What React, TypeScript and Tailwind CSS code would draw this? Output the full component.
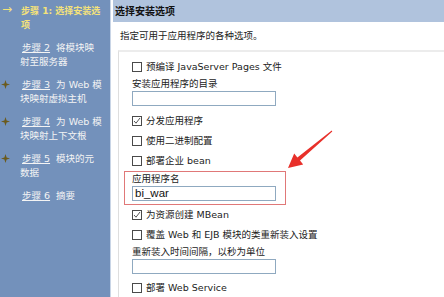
import React from "react";

const Star = () => (
  <svg width="9" height="9" viewBox="0 0 10 10" className="block">
    <path d="M5 0 L6.2 3.8 L10 5 L6.2 6.2 L5 10 L3.8 6.2 L0 5 L3.8 3.8 Z" fill="#6b5a1c" />
  </svg>
);

const Box = ({ checked }: { checked?: boolean }) => (
  <span className="flex h-[10px] w-[10px] shrink-0 items-center justify-center border border-[#4a4a4a] bg-white">
    {checked && (
      <svg width="8" height="8" viewBox="0 0 8 8">
        <path d="M1 4 L3 6.2 L7 1" stroke="#555" strokeWidth="1" fill="none" />
      </svg>
    )}
  </span>
);

const Row = ({ checked, children }: { checked?: boolean; children: React.ReactNode }) => (
  <div className="flex h-[20px] items-center gap-[4px] pl-[8px]">
    <Box checked={checked} />
    <span className="whitespace-nowrap">{children}</span>
  </div>
);

const Input = ({ value }: { value?: string }) => (
  <div className="flex h-[15px] w-[144px] items-center border border-[#8fa9c0] bg-white pl-[2px] font-[family-name:'Liberation_Sans',sans-serif] text-[11.5px] text-[#111]">
    {value}
  </div>
);

const Step = ({ n }: { n: string }) => <span className="underline decoration-[#f4f4f4]">步骤 {n}</span>;

export default function App() {
  const steps: { bullet: "arrow" | "star" | null; lines: React.ReactNode[]; active?: boolean }[] = [
    { bullet: "arrow", active: true, lines: ["步骤 1: 选择安装选", "项"] },
    { bullet: null, lines: [<><Step n="2" />&nbsp; 将模块映</>, "射至服务器"] },
    { bullet: "star", lines: [<><Step n="3" />&nbsp; 为 Web 模</>, "块映射虚拟主机"] },
    { bullet: "star", lines: [<><Step n="4" />&nbsp; 为 Web 模</>, "块映射上下文根"] },
    { bullet: "star", lines: [<><Step n="5" />&nbsp; 模块的元</>, "数据"] },
    { bullet: null, lines: [<><Step n="6" />&nbsp; 摘要</>] },
  ];

  return (
    <div className="relative flex h-[297px] w-[444px] overflow-hidden bg-white font-[family-name:'DejaVu_Sans','Noto_Sans_CJK_SC',sans-serif] text-[9.5px] text-[#222]">
      {/* Sidebar */}
      <div className="flex w-[111px] shrink-0 flex-col gap-[9px] overflow-hidden border-r border-r-[#c9d5e6] bg-[#7391bb] pt-[4px]">
        {steps.map((s, i) => (
          <div key={i} className="flex">
            <div className="flex w-[20px] shrink-0 justify-center">
              {s.bullet === "arrow" && (
                <span className="-ml-[6px] -mt-[2px] text-[12px] leading-[14px] text-[#f3e27a]">→</span>
              )}
              {s.bullet === "star" && (
                <span className="-ml-[10px] mt-[2px]">
                  <Star />
                </span>
              )}
            </div>
            <div
              className={
                s.active
                  ? "flex flex-col pl-[1px] text-[9px] font-bold text-[#f3e27a]"
                  : "flex flex-col text-[#f4f4f4]"
              }
            >
              {s.lines.map((l, j) => (
                <span key={j} className={j === 0 && !s.active ? "h-[14px] whitespace-nowrap pl-[2px] leading-[14px]" : "h-[14px] whitespace-nowrap leading-[14px]"}>
                  {l}
                </span>
              ))}
            </div>
          </div>
        ))}
      </div>

      {/* Content */}
      <div className="flex min-w-0 flex-1 flex-col pl-[2px]">
        <div className="flex h-[22px] shrink-0 items-center bg-[#b0c3dd] pl-[2px] text-[10px] font-bold text-[#111]">
          选择安装选项
        </div>
        <div className="flex h-[28px] shrink-0 items-center pl-[7px]">指定可用于应用程序的各种选项。</div>
        <div className="ml-[5px] flex flex-1 flex-col border-l border-t-2 border-l-[#dedede] border-t-[#ececec] pl-[5px] pt-[5px]">
          <Row>预编译 JavaServer Pages 文件</Row>
          <div className="flex h-[14px] items-center pl-[8px]">安装应用程序的目录</div>
          <div className="pl-[8px]">
            <Input />
          </div>
          <div className="mt-[5px]">
            <Row checked>分发应用程序</Row>
            <Row>使用二进制配置</Row>
            <Row>部署企业 bean</Row>
          </div>
          <div className="flex h-[34px] w-[162px] flex-col border border-[#e07878] pl-[7px]">
            <div className="flex h-[14px] items-center">应用程序名</div>
            <Input value="bi_war" />
          </div>
          <Row checked>为资源创建 MBean</Row>
          <Row>覆盖 Web 和 EJB 模块的类重新装入设置</Row>
          <div className="flex h-[14px] items-center pl-[8px]">重新装入时间间隔，以秒为单位</div>
          <div className="pl-[8px]">
            <Input />
          </div>
          <div className="mt-[4px]">
            <Row>部署 Web Service</Row>
          </div>
        </div>
      </div>

      {/* Annotation arrow */}
      <svg className="pointer-events-none absolute left-0 top-0" width="444" height="297">
        <polygon
          points="288,168 294.2,153.6 297.4,157.5 331.7,130.6 332.3,131.4 300,160.5 303.2,164.4"
          fill="#e8302a"
        />
      </svg>
    </div>
  );
}
